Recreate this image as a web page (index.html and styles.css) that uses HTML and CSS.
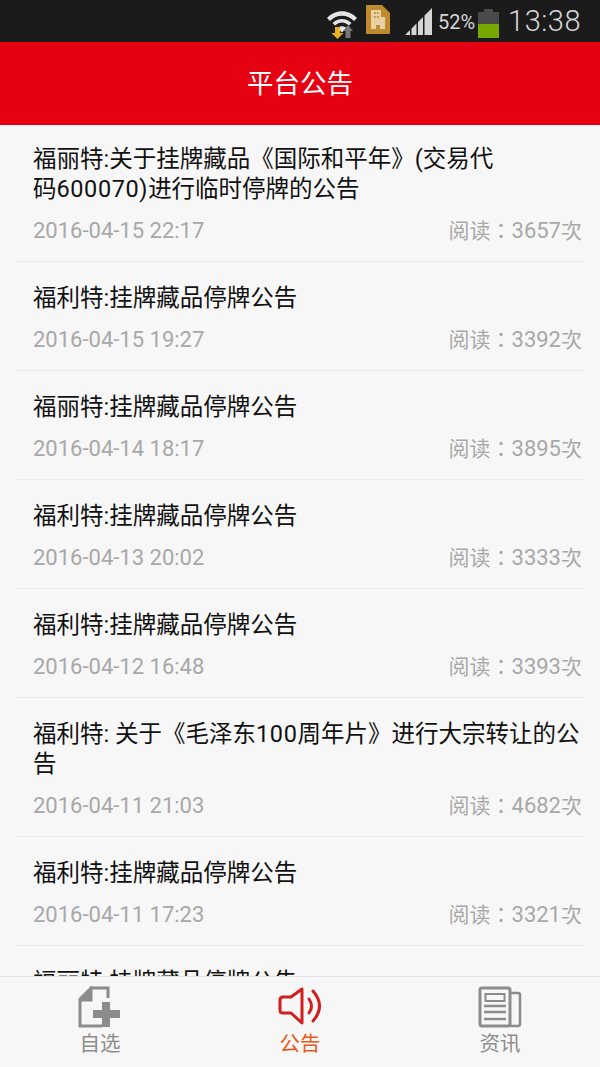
FILE: index.html
```html
<!DOCTYPE html>
<html lang="zh-CN">
<head>
<meta charset="utf-8">
<title>平台公告</title>
<link rel="stylesheet" href="styles.css">
</head>
<body>
<div class="app">
  <div class="status">
    <svg class="st-wifi" width="32" height="32" viewBox="0 0 32 32">
      <path d="M1 11 C9 2 23 2 31 11 L28 14 C21 7 11 7 4 14Z" fill="#e4e4e4"/>
      <path d="M6.500 16 C12 10.500 20 10.500 25.500 16 L23 18.500 C18.500 14.500 13.500 14.500 9 18.500Z" fill="#e4e4e4"/>
      <path d="M11.500 21 C14.500 18.500 17.500 18.500 20.500 21 L16 25.500Z" fill="#e4e4e4"/>
      <path d="M17 24 L22 18 L27 24 H24.500 V31 H19.500 V24Z" fill="#777"/>
      <path d="M9 20 H14 V26 H17.500 L11.500 32 L5.500 26 H9Z" fill="#e8b320"/>
    </svg>
    <svg class="st-file" width="24" height="29" viewBox="0 0 24 29">
      <path d="M1 0 H16 L24 8 V28 Q24 29 23 29 H1 Q0 29 0 28 V1 Q0 0 1 0Z" fill="#c08a2e"/>
      <path d="M6 5 H15 V12 H19 V24 H14 V20 H10 V24 H5 V5Z" fill="#e8d2a4"/>
      <path d="M8 7 H9.500 V9 H8Z M11 7 H12.500 V9 H11Z M8 11 H9.500 V13 H8Z M11 11 H12.500 V13 H11Z" fill="#c08a2e"/>
    </svg>
    <svg class="st-signal" width="28" height="28" viewBox="0 0 28 28">
      <path d="M0 27 L5 22 V27Z M6.500 27 V20.500 L11.500 15.500 V27Z M13 27 V14 L18 9 V27Z M19.500 27 V7.500 L27 0 V27Z" fill="#d6d6d6"/>
    </svg>
    <span class="st-pct">52%</span>
    <svg class="st-batt" width="21" height="29" viewBox="0 0 21 29">
      <path d="M6 0 H15 V3 H21 V29 H0 V3 H6Z" fill="#4a4a4a"/>
      <rect x="0" y="15" width="21" height="14" fill="#76a800"/>
    </svg>
    <span class="st-time">13:38</span>
  </div>
  <header class="head">平台公告</header>
  <main class="list">
    <article class="row first">
      <h2 class="title">福丽特:关于挂牌藏品《国际和平年》(交易代<span class="nb">码<span class="lat">600070)</span></span>进行临时停牌的公告</h2>
      <div class="meta"><span>2016-04-15 22:17</span><span><span class="cjk" lang="zh-TW">阅读：</span>3657<span class="cjk" lang="zh-TW">次</span></span></div>
    </article>
    <article class="row">
      <h2 class="title">福利特:挂牌藏品停牌公告</h2>
      <div class="meta"><span>2016-04-15 19:27</span><span><span class="cjk" lang="zh-TW">阅读：</span>3392<span class="cjk" lang="zh-TW">次</span></span></div>
    </article>
    <article class="row">
      <h2 class="title">福丽特:挂牌藏品停牌公告</h2>
      <div class="meta"><span>2016-04-14 18:17</span><span><span class="cjk" lang="zh-TW">阅读：</span>3895<span class="cjk" lang="zh-TW">次</span></span></div>
    </article>
    <article class="row">
      <h2 class="title">福利特:挂牌藏品停牌公告</h2>
      <div class="meta"><span>2016-04-13 20:02</span><span><span class="cjk" lang="zh-TW">阅读：</span>3333<span class="cjk" lang="zh-TW">次</span></span></div>
    </article>
    <article class="row">
      <h2 class="title">福利特:挂牌藏品停牌公告</h2>
      <div class="meta"><span>2016-04-12 16:48</span><span><span class="cjk" lang="zh-TW">阅读：</span>3393<span class="cjk" lang="zh-TW">次</span></span></div>
    </article>
    <article class="row">
      <h2 class="title">福利特: 关于《毛泽东<span class="lat">100</span>周年片》进行大宗转让的公告</h2>
      <div class="meta"><span>2016-04-11 21:03</span><span><span class="cjk" lang="zh-TW">阅读：</span>4682<span class="cjk" lang="zh-TW">次</span></span></div>
    </article>
    <article class="row">
      <h2 class="title">福利特:挂牌藏品停牌公告</h2>
      <div class="meta"><span>2016-04-11 17:23</span><span><span class="cjk" lang="zh-TW">阅读：</span>3321<span class="cjk" lang="zh-TW">次</span></span></div>
    </article>
    <article class="row">
      <h2 class="title">福丽特:挂牌藏品停牌公告</h2>
    </article>
  </main>
  <nav class="tabs">
    <div class="tab">
      <svg width="44" height="42" viewBox="0 0 44 42">
        <path d="M13 2 H30 V12 M1 14 L13 2 V14 H1 M2 14 V40 H24" fill="none" stroke="#8c8c8c" stroke-width="3"/>
        <path d="M13 2 L1 14 H13Z" fill="#8c8c8c"/>
        <path d="M24 16 H32 V24 H42 V32 H32 V41 H24 V32 H15 V24 H24Z" fill="#8c8c8c"/>
      </svg>
      <span>自选</span>
    </div>
    <div class="tab active">
      <svg width="44" height="42" viewBox="0 0 44 42">
        <path d="M24 3 V37 L13 27 H5 Q2 27 2 24 V14 Q2 11 5 11 H13Z" fill="none" stroke="#cf1f1f" stroke-width="3" stroke-linejoin="round"/>
        <path d="M31 13 Q36 20 31 27" fill="none" stroke="#cf1f1f" stroke-width="3" stroke-linecap="round"/>
        <path d="M35 5 Q48 20 35 35" fill="none" stroke="#cf1f1f" stroke-width="3" stroke-linecap="round"/>
      </svg>
      <span>公告</span>
    </div>
    <div class="tab">
      <svg width="44" height="42" viewBox="0 0 44 42">
        <rect x="2" y="2" width="30" height="38" rx="2" fill="none" stroke="#8c8c8c" stroke-width="3"/>
        <path d="M32 7 H40 Q42 7 42 9 V38 Q42 40 40 40 H32" fill="none" stroke="#8c8c8c" stroke-width="2.500"/>
        <rect x="7.500" y="8" width="19" height="7" fill="none" stroke="#8c8c8c" stroke-width="2"/>
        <path d="M6 20 H28 M6 26 H28 M6 33 H28" stroke="#8c8c8c" stroke-width="2.500"/>
      </svg>
      <span>资讯</span>
    </div>
  </nav>
</div>
</body>
</html>
```
FILE: styles.css
```css
* { box-sizing: border-box; }
html, body { margin: 0; padding: 0; }
body { font-family: Roboto, "Noto Sans CJK SC", sans-serif; background: #f7f7f7; }
.app { width: 600px; height: 1067px; display: flex; flex-direction: column; overflow: hidden; }

.status { height: 42px; flex: none; background: #1b1b1b; display: flex; align-items: center; padding-right: 19px; justify-content: flex-end; }
.st-wifi { margin-right: 8px; margin-top: 4px; }
.st-file { margin-right: 15px; margin-top: -3px; }
.st-signal { margin-right: 5px; margin-top: 2px; }
.st-pct { color: #d6d6d6; font-size: 20px; margin-right: 3px; margin-top: 1px; }
.st-batt { margin-right: 9px; margin-top: 4px; }
.st-time { color: #d6d6d6; font-size: 29px; font-weight: 300; letter-spacing: 0.5px; }

.head { height: 83px; flex: none; background: #e50012; color: #fff; font-size: 26.500px; padding-bottom: 4px; display: flex; align-items: center; justify-content: center; }

.list { flex: 1; min-height: 0; overflow: hidden; padding: 0 16px; }
.row { padding: 21px 0 15px; border-bottom: 1px solid #ebebeb; }
.row.first { padding-top: 19px; }
.title { margin: 0; padding: 0 0 0 17px; font-size: 23.500px; font-weight: 400; line-height: 30px; color: #111; }
.nb { white-space: nowrap; }
.lat { letter-spacing: 0.6px; }
.meta { margin-top: 12px; padding: 0 2px 0 17px; display: flex; justify-content: space-between; font-size: 22px; line-height: 30px; color: #a8a8a8; }
.cjk { font-family: "Noto Sans CJK TC", sans-serif; font-size: 21px; line-height: 0; }

.tabs { height: 91px; flex: none; background: #f7f7f7; border-top: 1px solid #e2e2e2; display: grid; grid-template-columns: repeat(3, 1fr); }
.tab { display: flex; flex-direction: column; align-items: center; padding-top: 9px; color: #8c8c8c; font-size: 20.500px; line-height: 28px; gap: 2px; }
.tab.active { color: #e8591a; }
```
